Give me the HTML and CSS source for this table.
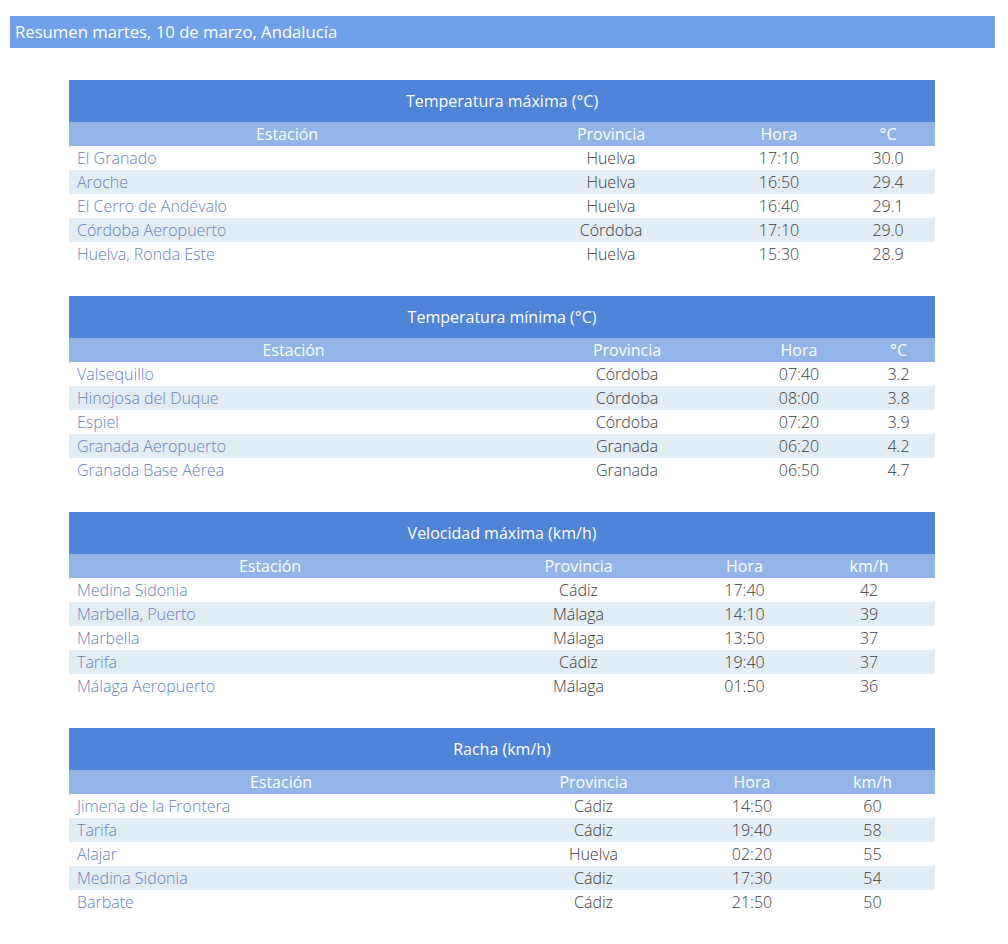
FILE: index.html
```html
<!DOCTYPE html>
<html lang="es">
<head>
<meta charset="utf-8">
<title>Resumen Andalucía</title>
<link rel="stylesheet" href="styles.css">
</head>
<body>
<div class="page">
  <div class="bar">Resumen martes, 10 de marzo, Andalucía</div>

  <table class="tbl t1">
    <colgroup><col class="c1"><col class="c2"><col class="c3"><col class="c4"></colgroup>
    <thead>
      <tr><th colspan="4" class="title">Temperatura máxima (°C)</th></tr>
      <tr class="head"><th>Estación</th><th>Provincia</th><th>Hora</th><th>°C</th></tr>
    </thead>
    <tbody>
      <tr><td class="st">El Granado</td><td>Huelva</td><td>17:10</td><td>30.0</td></tr>
      <tr><td class="st">Aroche</td><td>Huelva</td><td>16:50</td><td>29.4</td></tr>
      <tr><td class="st">El Cerro de Andévalo</td><td>Huelva</td><td>16:40</td><td>29.1</td></tr>
      <tr><td class="st">Córdoba Aeropuerto</td><td>Córdoba</td><td>17:10</td><td>29.0</td></tr>
      <tr><td class="st">Huelva, Ronda Este</td><td>Huelva</td><td>15:30</td><td>28.9</td></tr>
    </tbody>
  </table>

  <table class="tbl t2">
    <colgroup><col class="c1"><col class="c2"><col class="c3"><col class="c4"></colgroup>
    <thead>
      <tr><th colspan="4" class="title">Temperatura mínima (°C)</th></tr>
      <tr class="head"><th>Estación</th><th>Provincia</th><th>Hora</th><th>°C</th></tr>
    </thead>
    <tbody>
      <tr><td class="st">Valsequillo</td><td>Córdoba</td><td>07:40</td><td>3.2</td></tr>
      <tr><td class="st">Hinojosa del Duque</td><td>Córdoba</td><td>08:00</td><td>3.8</td></tr>
      <tr><td class="st">Espiel</td><td>Córdoba</td><td>07:20</td><td>3.9</td></tr>
      <tr><td class="st">Granada Aeropuerto</td><td>Granada</td><td>06:20</td><td>4.2</td></tr>
      <tr><td class="st">Granada Base Aérea</td><td>Granada</td><td>06:50</td><td>4.7</td></tr>
    </tbody>
  </table>

  <table class="tbl t3">
    <colgroup><col class="c1"><col class="c2"><col class="c3"><col class="c4"></colgroup>
    <thead>
      <tr><th colspan="4" class="title">Velocidad máxima (km/h)</th></tr>
      <tr class="head"><th>Estación</th><th>Provincia</th><th>Hora</th><th>km/h</th></tr>
    </thead>
    <tbody>
      <tr><td class="st">Medina Sidonia</td><td>Cádiz</td><td>17:40</td><td>42</td></tr>
      <tr><td class="st">Marbella, Puerto</td><td>Málaga</td><td>14:10</td><td>39</td></tr>
      <tr><td class="st">Marbella</td><td>Málaga</td><td>13:50</td><td>37</td></tr>
      <tr><td class="st">Tarifa</td><td>Cádiz</td><td>19:40</td><td>37</td></tr>
      <tr><td class="st">Málaga Aeropuerto</td><td>Málaga</td><td>01:50</td><td>36</td></tr>
    </tbody>
  </table>

  <table class="tbl t4">
    <colgroup><col class="c1"><col class="c2"><col class="c3"><col class="c4"></colgroup>
    <thead>
      <tr><th colspan="4" class="title">Racha (km/h)</th></tr>
      <tr class="head"><th>Estación</th><th>Provincia</th><th>Hora</th><th>km/h</th></tr>
    </thead>
    <tbody>
      <tr><td class="st">Jimena de la Frontera</td><td>Cádiz</td><td>14:50</td><td>60</td></tr>
      <tr><td class="st">Tarifa</td><td>Cádiz</td><td>19:40</td><td>58</td></tr>
      <tr><td class="st">Alajar</td><td>Huelva</td><td>02:20</td><td>55</td></tr>
      <tr><td class="st">Medina Sidonia</td><td>Cádiz</td><td>17:30</td><td>54</td></tr>
      <tr><td class="st">Barbate</td><td>Cádiz</td><td>21:50</td><td>50</td></tr>
    </tbody>
  </table>
</div>
</body>
</html>
```

FILE: styles.css
```css
html, body {
  margin: 0;
  padding: 0;
  background: #ffffff;
}

body {
  font-family: "Open Sans", "Noto Sans", "DejaVu Sans", sans-serif;
}

.page {
  width: 985px;
  margin-left: 10px;
  padding-top: 16px;
  display: flex;
  flex-direction: column;
  align-items: flex-start;
  gap: 30px;
}

.bar {
  align-self: stretch;
  height: 32px;
  line-height: 32px;
  background: #6fa1ea;
  color: #ffffff;
  font-size: 16.7px;
  padding-left: 5px;
  box-sizing: border-box;
  margin-bottom: 2px;
}

.tbl {
  width: 866px;
  margin-left: 59px;
  table-layout: fixed;
  border-collapse: collapse;
  border-spacing: 0;
}

.tbl th,
.tbl td {
  padding: 0;
  text-align: center;
  white-space: nowrap;
}

.tbl .title {
  height: 42px;
  background: #4f84d8;
  color: #ffffff;
  font-weight: 400;
  font-size: 16px;
}

.tbl .head th {
  height: 24px;
  background: #92b4e8;
  color: #ffffff;
  font-weight: 400;
  font-size: 16px;
}

.tbl td {
  height: 24px;
  font-size: 16px;
  font-weight: 300;
  color: #3c3c3c;
}

.tbl tbody tr:nth-child(even) td {
  background: #e2ecf4;
}

.tbl td.st {
  text-align: left;
  padding-left: 8px;
  color: #6682bc;
}

.t1 .c1 { width: 436px; }
.t1 .c2 { width: 212px; }
.t1 .c3 { width: 124px; }
.t1 .c4 { width: 94px; }

.t2 .c1 { width: 449px; }
.t2 .c2 { width: 218px; }
.t2 .c3 { width: 126px; }
.t2 .c4 { width: 73px; }

.t3 .c1 { width: 402px; }
.t3 .c2 { width: 215px; }
.t3 .c3 { width: 117px; }
.t3 .c4 { width: 132px; }

.t4 .c1 { width: 424px; }
.t4 .c2 { width: 201px; }
.t4 .c3 { width: 116px; }
.t4 .c4 { width: 125px; }
```
